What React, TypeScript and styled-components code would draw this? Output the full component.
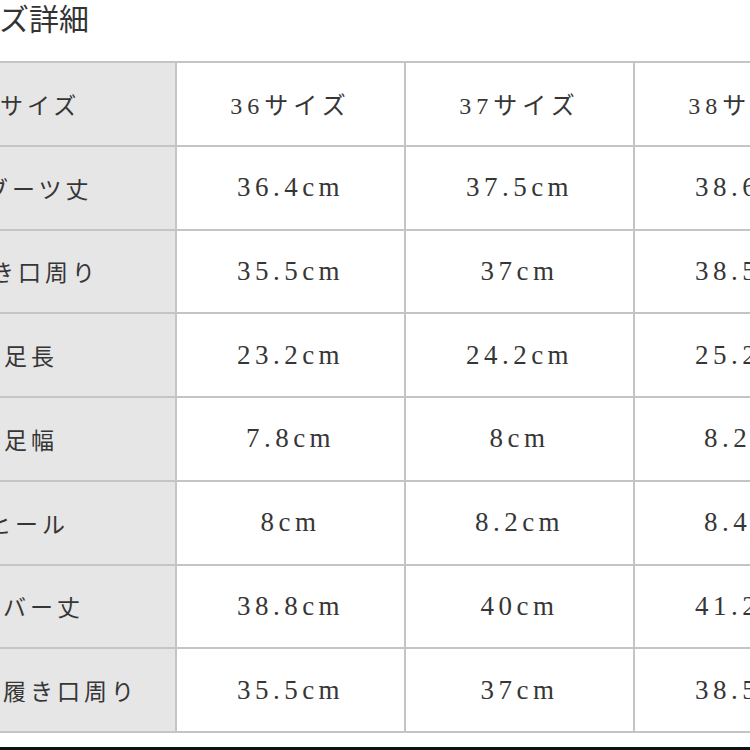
import { Fragment } from "react";
import styled, { createGlobalStyle } from "styled-components";

const GlobalStyle = createGlobalStyle`
  html, body {
    margin: 0;
    padding: 0;
    background: #ffffff;
  }
`;

const Page = styled.div`
  width: 750px;
  height: 750px;
  overflow: hidden;
  background: #ffffff;
  display: flex;
  flex-direction: column;
  font-family: "Liberation Serif", "Noto Sans CJK JP", serif;
  color: #363636;
`;

const Title = styled.h2`
  margin: 0 0 0 -60px;
  height: 61px;
  line-height: 40px;
  font-size: 30px;
  font-weight: 400;
  color: #333333;
  white-space: nowrap;
`;

const Table = styled.div`
  display: grid;
  grid-template-columns: 175px 227px 227px 227px;
  grid-auto-rows: 81.75px;
  gap: 2px;
  padding: 2px 0;
  background: #c4c4c4;
  width: max-content;
`;

const LabelCell = styled.div`
  background: #e6e6e6;
  display: flex;
  align-items: center;
  overflow: hidden;
  white-space: nowrap;
`;

const Label = styled.span<{ $shift: number }>`
  margin-left: ${(p) => p.$shift}px;
  font-size: 23px;
  letter-spacing: 4px;
`;

const ValueCell = styled.div`
  background: #ffffff;
  display: flex;
  align-items: center;
  justify-content: center;
  font-size: 27px;
  letter-spacing: 4.5px;
  white-space: nowrap;
`;

const HeadText = styled.span`
  font-size: 24px;
  letter-spacing: 5px;
`;

const BottomRule = styled.div`
  margin-top: auto;
  height: 3px;
  background: #111111;
`;

type Row = { label: string; shift: number; values: string[] };

const header = ["36サイズ", "37サイズ", "38サイズ"];

const rows: Row[] = [
  { label: "ブーツ丈", shift: -15, values: ["36.4cm", "37.5cm", "38.6cm"] },
  { label: "履き口周り", shift: -36, values: ["35.5cm", "37cm", "38.5cm"] },
  { label: "足長", shift: 4, values: ["23.2cm", "24.2cm", "25.2cm"] },
  { label: "足幅", shift: 4, values: ["7.8cm", "8cm", "8.2cm"] },
  { label: "ヒール", shift: -12, values: ["8cm", "8.2cm", "8.4cm"] },
  { label: "カバー丈", shift: -24, values: ["38.8cm", "40cm", "41.2cm"] },
  { label: "履き口周り", shift: 3, values: ["35.5cm", "37cm", "38.5cm"] },
];

export default function App() {
  return (
    <Page>
      <GlobalStyle />
      <Title>サイズ詳細</Title>
      <Table>
        <LabelCell>
          <Label $shift={0}>サイズ</Label>
        </LabelCell>
        {header.map((h) => (
          <ValueCell key={h}>
            <HeadText>{h}</HeadText>
          </ValueCell>
        ))}
        {rows.map((row, i) => (
          <Fragment key={i}>
            <LabelCell>
              <Label $shift={row.shift}>{row.label}</Label>
            </LabelCell>
            {row.values.map((v, j) => (
              <ValueCell key={j}>{v}</ValueCell>
            ))}
          </Fragment>
        ))}
      </Table>
      <BottomRule />
    </Page>
  );
}
